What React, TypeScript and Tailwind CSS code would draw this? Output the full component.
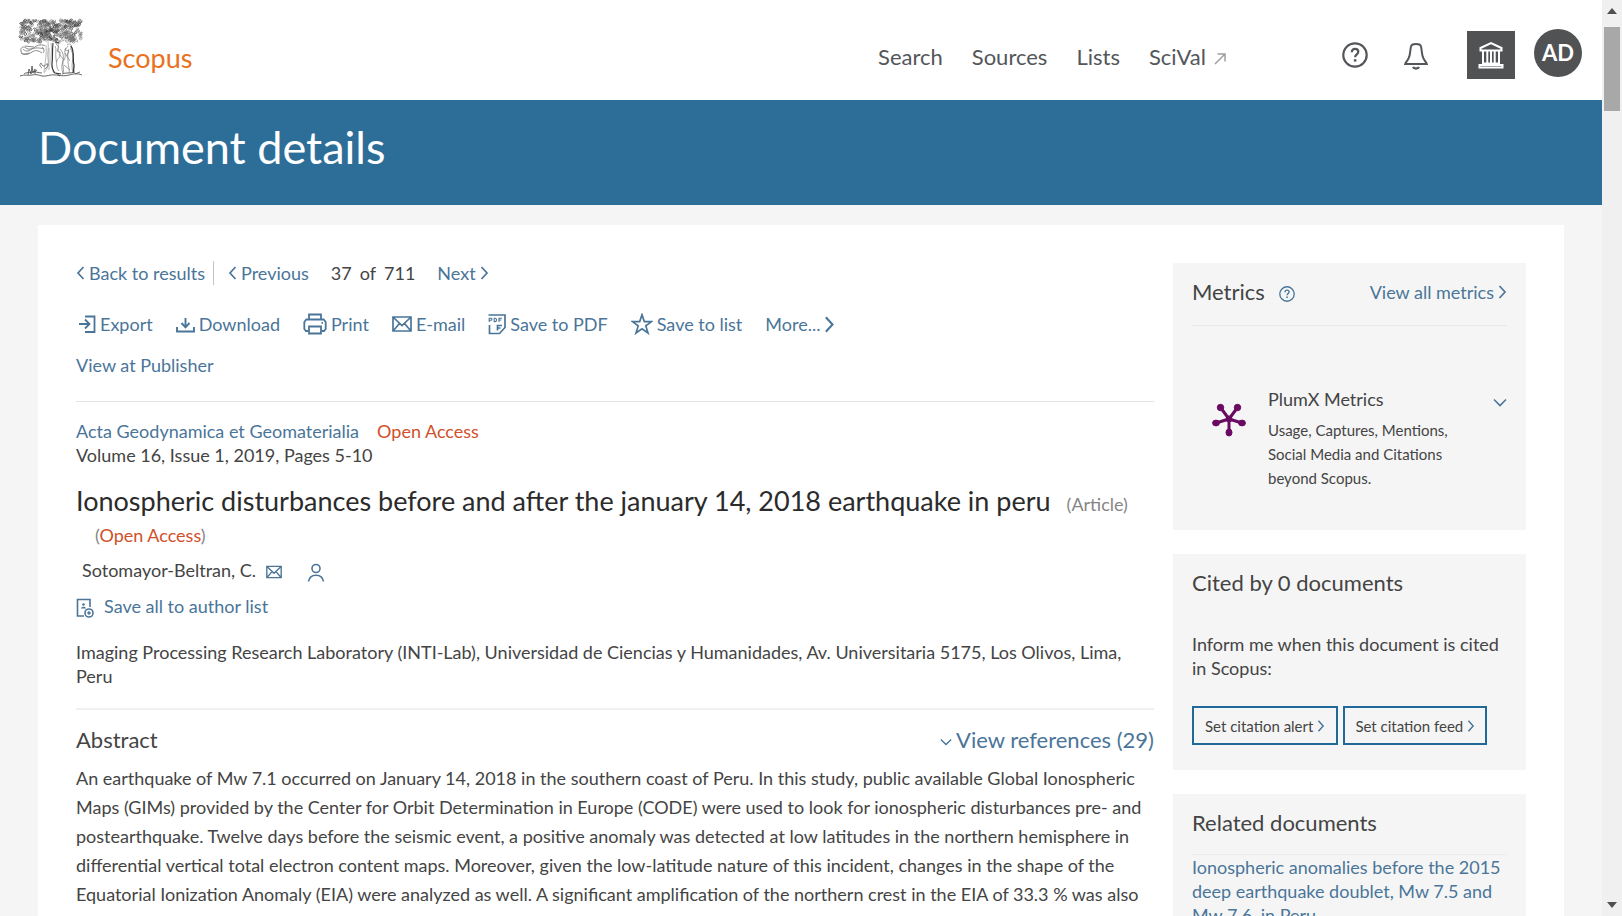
import type { ReactNode } from "react";

type IconProps = { className?: string };

const linkClass = "text-[#4a7599] hover:underline";

const NAV_ITEMS = ["Search", "Sources", "Lists"];

const ABSTRACT_LINES = [
  "An earthquake of Mw 7.1 occurred on January 14, 2018 in the southern coast of Peru. In this study, public available Global Ionospheric",
  "Maps (GIMs) provided by the Center for Orbit Determination in Europe (CODE) were used to look for ionospheric disturbances pre- and",
  "postearthquake. Twelve days before the seismic event, a positive anomaly was detected at low latitudes in the northern hemisphere in",
  "differential vertical total electron content maps. Moreover, given the low-latitude nature of this incident, changes in the shape of the",
  "Equatorial Ionization Anomaly (EIA) were analyzed as well. A significant amplification of the northern crest in the EIA of 33.3 % was also",
  "observed two days before the earthquake. On the other hand, no disturbances of seismic origin were seen once the main shock",
];

function ChevronLeft({ className }: IconProps) {
  return (
    <svg aria-hidden viewBox="0 0 9 14" fill="none" stroke="currentColor" strokeWidth="1.7" className={className}>
      <path d="M7.5 1 2 7l5.5 6" />
    </svg>
  );
}

function ChevronRight({ className }: IconProps) {
  return (
    <svg aria-hidden viewBox="0 0 9 14" fill="none" stroke="currentColor" strokeWidth="1.7" className={className}>
      <path d="M1.5 1 7 7l-5.5 6" />
    </svg>
  );
}

function ChevronDown({ className }: IconProps) {
  return (
    <svg aria-hidden viewBox="0 0 14 9" fill="none" stroke="currentColor" strokeWidth="1.6" className={className}>
      <path d="M1 1.5 7 7.5l6-6" />
    </svg>
  );
}

function ExportIcon() {
  return (
    <svg aria-hidden viewBox="0 0 18 20" fill="none" stroke="currentColor" strokeWidth="1.8" className="h-5 w-[18px]">
      <path d="M7 2.500h9.5v15.500H7" />
      <path d="M1 10h10M7 5.5l4.500 4.500L7 14.500" />
    </svg>
  );
}

function DownloadIcon() {
  return (
    <svg aria-hidden viewBox="0 0 19 18" fill="none" stroke="currentColor" strokeWidth="1.9" className="h-[18px] w-[19px]">
      <path d="M9.500 3v9M5.500 8l4 4.300 4-4.300" />
      <path d="M1 12v4.500h17V12" />
    </svg>
  );
}

function PrintIcon() {
  return (
    <svg aria-hidden viewBox="0 0 24 22" fill="none" stroke="currentColor" strokeWidth="1.8" className="h-[22px] w-6">
      <path d="M6 6.500V1.500h12v5" />
      <path d="M5 18H3l-1.700-2V9l2-2.500h17.400l2 2.500v7L21 18h-2" />
      <path d="M6 13.500h12v7H6zM18.500 9.800h1.500" />
    </svg>
  );
}

function MailIcon({ className }: IconProps) {
  return (
    <svg aria-hidden viewBox="0 0 20 16" fill="none" stroke="currentColor" strokeWidth="1.7" className={className}>
      <path d="M1 1h18v14H1zM1.500 1.500 10 9.500l8.500-8M1.500 14.500l6-7M18.500 14.500l-6-7" />
    </svg>
  );
}

function PdfIcon() {
  return (
    <svg aria-hidden viewBox="0 0 18 22" fill="none" stroke="currentColor" strokeWidth="1.7" className="h-[22px] w-[18px]">
      <path d="M.5 2h16.500v12.500L11.500 20.500H1.500V12" />
      <path d="M9.500 17.500v-5h4.500M9.500 15h3" />
      <path
        d="M1.200 9V5.200h1.800a1 1 0 0 1 0 2H1.200M6.200 5.200v3.400h.9c1.900 0 1.900-3.400 0-3.400zM11 9V5.200h3M11 7h2.200"
        strokeWidth="1.100"
      />
    </svg>
  );
}

function StarIcon() {
  return (
    <svg aria-hidden viewBox="0 0 22 22" fill="none" stroke="currentColor" strokeWidth="1.7" className="size-[22px]">
      <path d="M11 1.800 13.300 8.600H20.600L14.800 12.900 17 20 11 15.700 5 20 7.200 12.900 1.400 8.600H8.700z" />
    </svg>
  );
}

function PersonIcon() {
  return (
    <svg aria-hidden viewBox="0 0 18 20" fill="none" stroke="currentColor" strokeWidth="1.6" className="h-5 w-[18px]">
      <circle cx="9" cy="6.500" r="4" />
      <path d="M1.500 19.500C2.200 15 5 13.200 9 13.200s6.800 1.800 7.500 6.300" />
    </svg>
  );
}

function AuthorListIcon() {
  return (
    <svg aria-hidden viewBox="0 0 18 20" fill="none" stroke="currentColor" strokeWidth="1.6" className="h-5 w-[18px]">
      <path d="M14 9V1.500H1.500v16.500H8" />
      <circle cx="7.500" cy="6.500" r="1.300" fill="currentColor" stroke="none" />
      <path d="M5 10.500c.3-2.500 4.700-2.500 5 0z" fill="currentColor" stroke="none" />
      <circle cx="13" cy="15" r="4" />
      <path d="M13 13.200v3.600M11.200 15h3.600" />
    </svg>
  );
}

function HelpIcon({ className }: IconProps) {
  return (
    <svg aria-hidden viewBox="0 0 26 26" fill="none" stroke="currentColor" strokeWidth="2.200" className={className}>
      <circle cx="13" cy="13" r="11.700" />
      <path d="M9.800 10.200C9.800 8 11 6.800 13 6.800s3.300 1.200 3.300 3c0 2.400-3.200 2.700-3.200 5.400" />
      <path d="M13.100 17.200v2.400" strokeWidth="2.600" />
    </svg>
  );
}

function BellIcon() {
  return (
    <svg aria-hidden viewBox="0 0 26 28" fill="none" stroke="currentColor" strokeWidth="2" className="h-7 w-[26px]">
      <path d="M8 4.500c.5-3.500 9.500-3.500 10 0 1 4 .5 8.500 2.500 12 1 2 2.800 3.500 3.300 5.500H2.200c.5-2 2.300-3.500 3.300-5.500C7.500 13 7 8.500 8 4.500z" />
      <path d="M10 25c1 2 5 2 6 0" strokeWidth="2.400" />
    </svg>
  );
}

function InstitutionIcon() {
  return (
    <svg aria-hidden viewBox="0 0 26 28" fill="none" stroke="currentColor" strokeWidth="2" className="h-7 w-[26px]">
      <path d="M2.500 9.500V7L13 2l10.500 5v2.500z" />
      <path d="M5 10v13M9.300 10v13M13 10v13M16.700 10v13M21 10v13" strokeWidth="2" />
      <path d="M4 22.500h18M1.500 26.500v-2.500h23v2.500z" />
    </svg>
  );
}

function PlumIcon() {
  return (
    <svg aria-hidden viewBox="0 0 34 34" fill="#6b0a63" stroke="#6b0a63" className="mt-4 size-[34px]">
      <path d="M17 16 8.500 4.500M17 16l8.500-11.500M17 16 4 20M17 16l13 4M17 16v14" strokeWidth="3" />
      <circle cx="8.500" cy="4.500" r="3.200" />
      <circle cx="25.500" cy="4.500" r="3.200" />
      <ellipse cx="4" cy="20" rx="3.400" ry="2.900" />
      <ellipse cx="30" cy="20" rx="3.400" ry="2.900" />
      <ellipse cx="17" cy="29.500" rx="3" ry="3.500" />
      <circle cx="17" cy="16" r="3" />
    </svg>
  );
}

function noise(seed: number) {
  const n = Math.sin(seed * 127.1) * 43758.5453;
  return n - Math.floor(n);
}

// small curled leaves scattered over the crown of the tree
const LEAVES = Array.from({ length: 270 }, (_, i) => {
  const x = 2.5 + noise(i + 1) * 61;
  const edge = Math.abs(x - 33) > 26 ? 3 : 0;
  return {
    x,
    y: 2.5 + noise(i + 501) * (22 - edge),
    turn: noise(i + 901) * 360,
    dark: i % 4 === 0,
  };
});

function TreeLogo() {
  return (
    <svg role="img" aria-label="Elsevier" viewBox="0 0 66 60" fill="none" stroke="#666" strokeWidth=".6" className="h-[60px] w-[66px]">
      {LEAVES.map((leaf, i) => (
        <path
          key={i}
          d="M-1.700 .8C-1.700-1.600 1.700-1.600 1.700 .3S-.3 1.600 0 0"
          fill={i % 11 === 0 ? "#777" : "none"}
          stroke={leaf.dark ? "#222" : "#777"}
          transform={`translate(${leaf.x.toFixed(1)} ${leaf.y.toFixed(1)}) rotate(${leaf.turn.toFixed(0)})`}
        />
      ))}
      <path
        d="M3 33c-1-4 3-5 5-3s7 1 9-1 8-3 10-1M3 35c4 3 8 1 11-1s6-2 10 1M5 31c2 2 4 3 7 1s7-3 14-1M3 33c0 2 1 3 3 3l6-1M24 29c3 2 2 5 1 6M7 28l9 1"
        stroke="#888"
        strokeWidth="1"
      />
      <path d="M30 24c1 7-1 11 0 17s0 9-4 14M33 25c1 5 0 12 0 18 0 5 1 8 3 12M28 27c1 8-1 18-2 27M31 30v22" stroke="#888" />
      <path d="M35 25c-1 9 0 15-1 21 0 4 1 7 3 9l6 1M37 24l4 1" stroke="#333" strokeWidth="1.100" />
      <path d="M37 25c3-2 4 2 3 5s3 5 2 8-4 3-3 6M42 31c3 3 4 7 3 11s-2 8 0 13M41 36l5 6M37 28c2 3 0 8 1 13s0 9 3 12M38 26l3 3-2 4 4 2" />
      <path d="M49 27c2-2 5-1 4 2s2 5 2 9-2 9 0 17M48 30c-3 3 1 8-2 12s1 8-1 13M51 31c-2 4-1 9-1 13s2 7 1 11M47 35l5 8M46 47l6 5M50 28l-3 4 4 1-2 5" />
      <path d="M53 28c4 6 1 13 3 19 0 4-1 5 0 8" stroke="#333" strokeWidth="1.300" />
      <path
        d="M2 58c5-2 8 0 12-1s6 0 10 1 8-2 14-1 9 1 13 0 8-2 13 0M6 56c2-2 5-1 8-2s6 1 10 1M10 57l1-6 2 5 1-8 1 7 2-4v5M16 54l3-2M44 56c4-2 8 0 12-2M57 56l5-2M38 55l4 3"
        stroke="#444"
        strokeWidth=".8"
      />
      <path d="M24 50c-2-1-3-4-1-5 1 2 1 3 3 3s2-3 4-2c0 3-2 4-3 5" strokeWidth=".9" />
    </svg>
  );
}

function ToolLink({ icon, children }: { icon: ReactNode; children: ReactNode }) {
  return (
    <li>
      <a href="#" className={`flex items-center gap-1 ${linkClass}`}>
        {icon}
        <span>{children}</span>
      </a>
    </li>
  );
}

function Header() {
  return (
    <header className="flex h-[100px] items-start justify-between bg-white pl-[18px] pr-5 text-[#53565a]">
      <a href="#" className="flex items-start">
        <span className="pt-[18px]">
          <TreeLogo />
        </span>
        <span className="pl-6 pt-[42px] text-[27px] leading-8 text-[#e9711c]">Scopus</span>
      </a>
      <div className="flex items-start">
        <nav aria-label="Main" className="flex gap-[29px] pt-[43px] text-[22px] leading-7">
          {NAV_ITEMS.map((item) => (
            <a key={item} href="#" className="hover:text-[#e9711c]">
              {item}
            </a>
          ))}
          <a href="#" className="flex items-center gap-2 hover:text-[#e9711c]">
            SciVal
            <svg aria-hidden viewBox="0 0 12 12" fill="none" stroke="#a0a0a0" strokeWidth="1.500" className="mt-1 size-3">
              <path d="M1 11 11 1M3.500 1H11v7.500" />
            </svg>
          </a>
        </nav>
        <button type="button" aria-label="Help" className="ml-[116px] mt-[42px]">
          <HelpIcon className="size-[26px]" />
        </button>
        <button type="button" aria-label="Notifications" className="ml-[35px] mt-[42px]">
          <BellIcon />
        </button>
        <button
          type="button"
          aria-label="Institution"
          className="ml-[38px] mt-[31px] flex size-12 items-center justify-center bg-[#505254] text-white"
        >
          <InstitutionIcon />
        </button>
        <button
          type="button"
          className="ml-[19px] mt-[29px] flex size-12 items-center justify-center rounded-full bg-[#505254] text-[22px] font-bold text-white"
        >
          AD
        </button>
      </div>
    </header>
  );
}

function DocumentMain() {
  return (
    <main className="min-w-0 flex-1 leading-6">
      <nav aria-label="Results" className="flex h-5 items-center">
        <a href="#" className={`flex items-center gap-1 ${linkClass}`}>
          <ChevronLeft className="h-[14px] w-[9px]" />
          Back to results
        </a>
        <span className="ml-2 mr-[14px] h-6 w-px bg-[#c4c4c4]" />
        <a href="#" className={`flex items-center gap-1 ${linkClass}`}>
          <ChevronLeft className="h-[14px] w-[9px]" />
          Previous
        </a>
        <span className="ml-[22px] flex gap-2">
          <span>37</span>
          <span>of</span>
          <span>711</span>
        </span>
        <a href="#" className={`ml-[22px] flex items-center gap-1 ${linkClass}`}>
          Next
          <ChevronRight className="h-[14px] w-[9px]" />
        </a>
      </nav>

      <ul className="mt-[29px] flex items-center gap-[23px] pl-[2px]">
        <ToolLink icon={<ExportIcon />}>Export</ToolLink>
        <ToolLink icon={<DownloadIcon />}>Download</ToolLink>
        <ToolLink icon={<PrintIcon />}>Print</ToolLink>
        <ToolLink icon={<MailIcon className="h-4 w-5" />}>E-mail</ToolLink>
        <ToolLink icon={<PdfIcon />}>Save to PDF</ToolLink>
        <ToolLink icon={<StarIcon />}>Save to list</ToolLink>
        <li>
          <a href="#" className={`flex items-center gap-1 ${linkClass}`}>
            More...
            <ChevronRight className="h-[17px] w-[11px]" />
          </a>
        </li>
      </ul>

      <p className="mt-[17px] border-b border-[#e4e4e4] pb-6">
        <a href="#" className={linkClass}>
          View at Publisher
        </a>
      </p>

      <p className="mt-[17px]">
        <a href="#" className={`mr-[18px] ${linkClass}`}>
          Acta Geodynamica et Geomaterialia
        </a>
        <span className="text-[#d0502b]">Open Access</span>
      </p>
      <p>Volume 16, Issue 1, 2019, Pages 5-10</p>

      <h2 className="mt-4 text-[27px] leading-9 text-[#2b2b2b]">
        Ionospheric disturbances before and after the january 14, 2018 earthquake in peru
        <span className="ml-4 text-lg text-[#858585]">(Article)</span>
      </h2>
      <p className="pl-[19px] pt-1 text-[#858585]">
        (<span className="text-[#d0502b]">Open Access</span>)
      </p>

      <p className="mt-[11px] flex items-center pl-[6px]">
        Sotomayor-Beltran, C.
        <a href="#" aria-label="E-mail the author" className={`ml-[10px] pt-1 ${linkClass}`}>
          <MailIcon className="h-[14px] w-4" />
        </a>
        <a href="#" aria-label="Author profile" className={`ml-[25px] pt-1 ${linkClass}`}>
          <PersonIcon />
        </a>
      </p>
      <p className="mt-3">
        <a href="#" className={`flex items-center gap-[10px] ${linkClass}`}>
          <span className="pt-1">
            <AuthorListIcon />
          </span>
          Save all to author list
        </a>
      </p>

      <p className="mt-[22px] border-b-2 border-[#f0f0f0] pb-5">
        Imaging Processing Research Laboratory (INTI-Lab), Universidad de Ciencias y Humanidades, Av. Universitaria 5175, Los Olivos, Lima,
        <br />
        Peru
      </p>

      <div className="mt-4 flex items-center justify-between text-[22px] leading-7">
        <h3>Abstract</h3>
        <a href="#references" className={`flex items-center gap-1 ${linkClass}`}>
          <ChevronDown className="mt-1 h-2 w-3" />
          View references (29)
        </a>
      </div>
      <p className="mt-[10px] leading-[29px]">
        {ABSTRACT_LINES.map((line) => (
          <span key={line} className="block whitespace-nowrap">
            {line}
          </span>
        ))}
      </p>
    </main>
  );
}

function Sidebar() {
  return (
    <aside className="flex w-[353px] shrink-0 flex-col gap-6 leading-6">
      <section className="h-[267px] bg-[#f5f5f5] px-[19px] pt-[15px]">
        <div className="flex items-center border-b border-[#e9e9e9] pb-[19px]">
          <h3 className="text-[22px] leading-7">Metrics</h3>
          <button type="button" aria-label="About metrics" className="ml-[14px] mt-1 text-[#4a7599]">
            <HelpIcon className="size-4" />
          </button>
          <a href="#" className={`ml-auto flex items-center gap-1 ${linkClass}`}>
            View all metrics
            <ChevronRight className="h-[14px] w-[9px]" />
          </a>
        </div>
        <div className="mt-[61px] flex pl-5">
          <PlumIcon />
          <div className="ml-[22px] flex-1">
            <h4>PlumX Metrics</h4>
            <p className="mt-[7px] w-[190px] text-[15px]">
              Usage, Captures, Mentions, Social Media and Citations beyond Scopus.
            </p>
          </div>
          <button type="button" aria-label="Expand PlumX metrics" className="self-start pt-[11px] text-[#4a7599]">
            <ChevronDown className="h-[9px] w-[14px]" />
          </button>
        </div>
      </section>

      <section className="h-[216px] bg-[#f5f5f5] px-[19px] pt-[15px]">
        <h3 className="text-[22px] leading-7">Cited by 0 documents</h3>
        <p className="mt-[35px]">
          Inform me when this document is cited
          <br />
          in Scopus:
        </p>
        <div className="mt-[26px] flex gap-[5px] text-[15px]">
          <button type="button" className="flex h-[39px] items-center gap-1 border-2 border-[#1f6a98] px-[11px]">
            Set citation alert
            <ChevronRight className="h-3 w-2 text-[#4a7599]" />
          </button>
          <button type="button" className="flex h-[39px] items-center gap-1 border-2 border-[#1f6a98] px-[10px]">
            Set citation feed
            <ChevronRight className="h-3 w-2 text-[#4a7599]" />
          </button>
        </div>
      </section>

      <section className="bg-[#f5f5f5] px-[19px] pb-5 pt-[15px]">
        <h3 className="border-b border-[#ececec] pb-[17px] text-[22px] leading-7">Related documents</h3>
        <a href="#" className={`block ${linkClass}`}>
          Ionospheric anomalies before the 2015
          <br />
          deep earthquake doublet, Mw 7.5 and
          <br />
          Mw 7.6, in Peru
        </a>
      </section>
    </aside>
  );
}

function ScrollTrack() {
  return (
    <div aria-hidden className="flex w-5 shrink-0 flex-col items-center bg-[#f0f0f0]">
      <span className="mt-2 border-x-[5px] border-b-[6px] border-x-transparent border-b-[#505050]" />
      <span className="mt-[13px] h-[84px] w-4 bg-[#a8a8a8]" />
      <span className="mb-2 mt-auto border-x-[5px] border-t-[6px] border-x-transparent border-t-[#505050]" />
    </div>
  );
}

export default function App() {
  return (
    <div className="flex h-screen overflow-hidden bg-[#f5f5f5] font-['Lato',sans-serif] text-lg text-[#444]">
      <div className="min-w-0 flex-1 overflow-hidden">
        <Header />
        <div className="h-[105px] bg-[#2d6e99] px-[38px] pt-[19px]">
          <h1 className="text-[45px] leading-[56px] text-white">Document details</h1>
        </div>
        <div className="mx-[38px] mt-5 flex gap-[19px] bg-white px-[38px] pb-10 pt-[38px]">
          <DocumentMain />
          <Sidebar />
        </div>
      </div>
      <ScrollTrack />
    </div>
  );
}
